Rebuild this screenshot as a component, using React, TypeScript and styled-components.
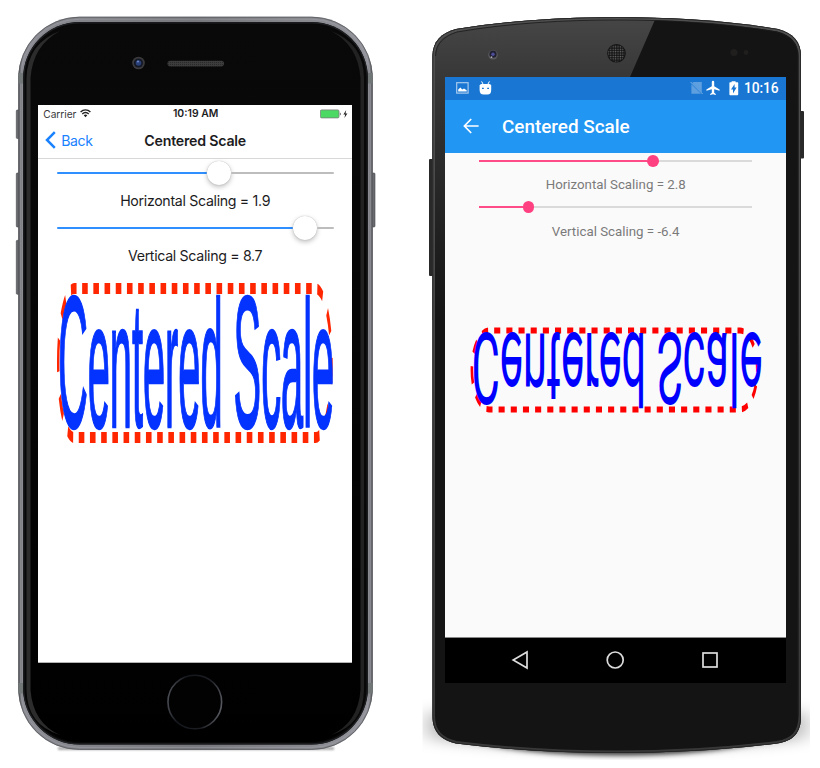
import React from "react";
import styled, { createGlobalStyle } from "styled-components";

const GlobalStyle = createGlobalStyle`
  * { box-sizing: border-box; }
  body { margin: 0; background: #fff; }
`;

const Page = styled.main`
  display: grid;
  grid-template-columns: 410px 410px;
  width: 820px;
  height: 768px;
  overflow: hidden;
  background: #fff;
`;

const Stage = styled.section`
  display: grid;
  grid-template: 768px / 410px;
`;

const Chassis = styled.svg`
  grid-area: 1 / 1;
  display: block;
`;

const Screen = styled.div`
  grid-area: 1 / 1;
  display: flex;
  flex-direction: column;
  overflow: hidden;
  white-space: nowrap;
`;

/* ---------- iOS ---------- */

const IosScreen = styled(Screen)`
  margin: 105.4px 0 0 38.3px;
  width: 313.7px;
  height: 557.4px;
  background: #fff;
  border-bottom: 1px solid #b4b4b4;
  font-family: Inter, "Liberation Sans", sans-serif;
  color: #1c1c1e;
`;

const IosStatus = styled.div`
  display: grid;
  grid-template-columns: 1fr auto 1fr;
  align-items: center;
  flex: none;
  height: 17.2px;
  padding: 0 4px 0 5px;
  font-size: 10.2px;
`;

const Carrier = styled.span`
  display: flex;
  align-items: center;
  gap: 4px;
  color: #3a3a3a;
  letter-spacing: -0.05px;
`;

const IosTime = styled.span`
  font-weight: 600;
  font-size: 10.4px;
  letter-spacing: 0;
`;

const Battery = styled.span`
  display: flex;
  justify-content: flex-end;
`;

const IosNav = styled.div`
  display: grid;
  grid-template-columns: 1fr auto 1fr;
  align-items: center;
  flex: none;
  height: 36px;
  padding: 0 7px 0 7px;
  border-bottom: 1px solid #d8d8d8;
`;

const Back = styled.span`
  display: flex;
  align-items: center;
  gap: 5px;
  color: #1a82ff;
  font-size: 14.1px;
  letter-spacing: -0.45px;
`;

const IosTitle = styled.span`
  font-size: 14.2px;
  font-weight: 600;
  letter-spacing: -0.22px;
`;

const Slider = styled.div<{ $height: number; $inset: string }>`
  display: flex;
  align-items: center;
  flex: none;
  height: ${(p) => p.$height}px;
  padding: ${(p) => p.$inset};
`;

const IosTrack = styled.span<{ $length?: number }>`
  height: 2px;
  border-radius: 1px;
  ${(p) =>
    p.$length
      ? `width: ${p.$length}px; background: #2f8fff;`
      : "flex: 1; background: #bdbdbd;"}
`;

const IosThumb = styled.span`
  width: 24px;
  height: 24px;
  flex: none;
  border-radius: 50%;
  background: #fff;
  box-shadow: 0 0 1px rgba(0, 0, 0, 0.3), 0 2px 5px rgba(0, 0, 0, 0.25);
`;

const IosLabel = styled.div`
  display: flex;
  align-items: center;
  justify-content: center;
  flex: none;
  height: 27px;
  font-size: 14.2px;
  letter-spacing: -0.33px;
`;

const Canvas = styled.svg`
  display: block;
  flex: none;
`;

/* ---------- Android ---------- */

const DroidScreen = styled(Screen)`
  margin: 77px 0 0 35.4px;
  width: 340.6px;
  height: 605.5px;
  background: #fafafa;
  font-family: Roboto, "Liberation Sans", sans-serif;
`;

const DroidStatus = styled.div`
  display: flex;
  align-items: center;
  flex: none;
  height: 22.5px;
  padding: 0 7.4px 0 10.4px;
  background: #1976d2;
  color: #fff;
`;

const Clock = styled.span`
  margin-left: 3px;
  font-size: 13.8px;
  font-weight: 500;
  letter-spacing: -0.1px;
`;

const AppBar = styled.div`
  display: flex;
  align-items: center;
  flex: none;
  height: 53.1px;
  padding-left: 17.6px;
  gap: 23px;
  background: #2196f3;
  color: #fff;
`;

const DroidTitle = styled.span`
  font-size: 18.9px;
  font-weight: 500;
`;

const DroidTrack = styled.span<{ $length?: number }>`
  height: 2px;
  ${(p) =>
    p.$length
      ? `width: ${p.$length}px; background: #ff4c88;`
      : "flex: 1; background: #dadada;"}
`;

const DroidThumb = styled.span`
  width: 11.6px;
  height: 11.6px;
  flex: none;
  border-radius: 50%;
  background: #ff4081;
`;

const DroidLabel = styled.div`
  display: flex;
  align-items: center;
  justify-content: center;
  flex: none;
  height: 30.1px;
  padding-top: 1.4px;
  color: #7a7a7a;
  font-size: 13.3px;
`;

const NavKeys = styled.div`
  display: flex;
  align-items: center;
  justify-content: space-between;
  flex: 1;
  padding: 0 67px 0 66px;
  border-top: 1px solid #888;
  background: #000;
`;

const Spacer = styled.span`
  flex: 1;
`;

const IPhoneBody = () => (
  <Chassis width="410" height="768" viewBox="0 0 410 768">
    <defs>
      <linearGradient id="rim" x1="0" x2="1" y1="0" y2="0">
        <stop offset="0" stopColor="#55565b" />
        <stop offset="0.012" stopColor="#8b8c93" />
        <stop offset="0.5" stopColor="#77787d" />
        <stop offset="0.986" stopColor="#92939a" />
        <stop offset="1" stopColor="#5c5d62" />
      </linearGradient>
      <linearGradient id="glass" x1="0" x2="0" y1="0" y2="1">
        <stop offset="0" stopColor="#090909" />
        <stop offset="0.4" stopColor="#060606" />
        <stop offset="1" stopColor="#000" />
      </linearGradient>
      <linearGradient id="home" x1="0" x2="1" y1="0.4" y2="0.6">
        <stop offset="0" stopColor="#4b4d55" />
        <stop offset="0.25" stopColor="#14171c" />
        <stop offset="0.7" stopColor="#1c1e24" />
        <stop offset="1" stopColor="#575960" />
      </linearGradient>
      <pattern id="mesh" width="2" height="2" patternUnits="userSpaceOnUse">
        <rect width="2" height="2" fill="#3c3c3c" />
        <rect width="1" height="1" fill="#292929" />
      </pattern>
      <filter id="softIos" x="-20%" width="140%" y="-200%" height="500%">
        <feGaussianBlur stdDeviation="1.2" />
      </filter>
    </defs>
    <rect x="58" y="747" width="276" height="3" fill="#aaa" filter="url(#softIos)" />
    <g fill="#686a6f" stroke="#45464a" strokeWidth="0.6">
      <rect x="16.3" y="110" width="4" height="28.5" rx="1" />
      <rect x="16.3" y="173" width="4" height="54" rx="1" />
      <rect x="16.3" y="240.3" width="4" height="54" rx="1" />
      <rect x="371" y="173" width="4" height="54" rx="1" />
    </g>
    <rect x="18.3" y="16.8" width="354.4" height="733" rx="61" fill="url(#rim)" />
    <rect x="18.7" y="17.2" width="353.6" height="732.2" rx="60.6" fill="none" stroke="#58595d" strokeWidth="0.8" />
    <rect x="20.6" y="19.2" width="349.8" height="728.2" rx="58.8" fill="none" stroke="#a2a3aa" strokeWidth="1" strokeOpacity="0.5" />
    <g fill="#717676">
      <rect x="18.3" y="73" width="5" height="10.5" />
      <rect x="367.7" y="73" width="5" height="10.5" />
      <rect x="18.3" y="683" width="5" height="10.5" />
      <rect x="367.7" y="683" width="5" height="10.5" />
    </g>
    <rect x="23" y="22" width="345" height="722.5" rx="56.5" fill="#080808" />
    <rect x="23.8" y="22.8" width="343.4" height="721" rx="55.7" fill="none" stroke="#202124" strokeWidth="1.2" />
    <rect x="27" y="25" width="337" height="717" rx="53" fill="url(#glass)" />
    <path d="M26.5 690V78Q27.5 43 60 31Q33 45 30.5 78V690Q33 723 60 735Q27 725 26.5 690Z" fill="#2c2c2c" />
    <path d="M364 690V78Q363.5 43 331 31Q358 45 360.5 78V690Q358 723 331 735Q363.5 725 364 690Z" fill="#222" />
    <circle cx="138.5" cy="63" r="6.3" fill="#3b3b3e" />
    <circle cx="138.5" cy="63" r="4.6" fill="#141824" />
    <circle cx="138.5" cy="63" r="2.8" fill="#293f78" />
    <circle cx="138" cy="61.5" r="1.1" fill="#6886c4" />
    <rect x="167.5" y="60.8" width="56.5" height="5.6" rx="2.8" fill="url(#mesh)" />
    <circle cx="194.8" cy="702" r="26.8" fill="#020202" stroke="url(#home)" strokeWidth="1.6" />
  </Chassis>
);

const nexusOutline =
  "M432.5 56C432.5 42 441 33 456 29C510 20 565 17.2 617 17.2C670 17.2 724 20 778 29C793 33 801 42 801 56V716C801 733 793 741 777 743.5C725 750 670 753 617 753C565 753 508 750 456 743.5C441 740 432.5 732 432.5 716Z";

const NexusBody = () => (
  <Chassis width="410" height="768" viewBox="410 0 410 768">
    <defs>
      <linearGradient id="faceLeft" x1="0" x2="0" y1="17" y2="320" gradientUnits="userSpaceOnUse">
        <stop offset="0" stopColor="#464646" />
        <stop offset="0.22" stopColor="#363636" />
        <stop offset="1" stopColor="#141414" />
      </linearGradient>
      <linearGradient id="edge" x1="0" x2="0" y1="0" y2="1">
        <stop offset="0" stopColor="#505050" />
        <stop offset="0.7" stopColor="#3f3f3f" />
        <stop offset="1" stopColor="#383838" />
      </linearGradient>
      <clipPath id="bodyClip">
        <path d={nexusOutline} />
      </clipPath>
      <pattern id="grille" width="2.4" height="2.4" patternUnits="userSpaceOnUse">
        <rect width="2.4" height="2.4" fill="#151515" />
        <circle cx="1.2" cy="1.2" r="0.7" fill="#707070" />
      </pattern>
      <filter id="ground" x="-20%" width="140%" y="-60%" height="260%">
        <feGaussianBlur stdDeviation="12 7" />
      </filter>
      <filter id="contact" x="-20%" width="140%" y="-100%" height="300%">
        <feGaussianBlur stdDeviation="9 2.6" />
      </filter>
      <clipPath id="groundClip">
        <rect x="422.5" y="690" width="387.5" height="70" />
      </clipPath>
    </defs>
    <g clipPath="url(#groundClip)">
      <path d="M430 712H804V738Q720 748 617 748Q515 748 430 738Z" fill="#000" fillOpacity="0.32" filter="url(#ground)" />
      <path d="M462 735H774Q730 755.5 617 755.5Q505 755.5 462 735Z" fill="#000" fillOpacity="0.75" filter="url(#contact)" />
    </g>
    <rect x="429" y="159" width="5" height="117" rx="1" fill="#292929" />
    <rect x="799" y="111" width="5" height="47.5" rx="1" fill="#292929" />
    <path d={nexusOutline} fill="#141414" />
    <g clipPath="url(#bodyClip)">
      <path d="M430 15H657L630 77L550 320H430Z" fill="url(#faceLeft)" />
      <path d={nexusOutline} fill="none" stroke="url(#edge)" strokeWidth="5" />
      <path d={nexusOutline} fill="none" stroke="#242424" strokeWidth="1.6" />
      <path
        d="M435.6 56C435.6 44 444 36 457 32C510 22.9 565 20 617 20C670 20 724 22.9 777 32C790 36 798 44 798 56V716"
        fill="none"
        stroke="#1c1c1c"
        strokeWidth="0.8"
      />
    </g>
    <circle cx="493" cy="54.8" r="4.8" fill="#5b5b5f" />
    <circle cx="493" cy="54.2" r="3.6" fill="#202030" />
    <circle cx="493" cy="54.2" r="1.7" fill="#4d4d9a" />
    <circle cx="491.5" cy="57.2" r="0.9" fill="#aaa" />
    <circle cx="616.5" cy="53.3" r="9.3" fill="#141414" />
    <circle cx="616.5" cy="53.3" r="8.4" fill="url(#grille)" />
    <circle cx="734" cy="52.5" r="3.6" fill="#211e1e" />
    <circle cx="746" cy="52.5" r="2.4" fill="#211e1e" />
  </Chassis>
);

const WifiIcon = () => (
  <svg width="11" height="9" viewBox="0 0 11 9" fill="none" stroke="#222" strokeWidth="1.4">
    <path d="M.6 3C3.4.2 7.6.2 10.4 3" />
    <path d="M2.3 4.9C4.1 3.1 6.9 3.1 8.7 4.9" />
    <path d="M3.7 6.2Q5.5 4.7 7.3 6.2L5.5 8.2Z" fill="#222" stroke="none" />
  </svg>
);

const BatteryIcon = () => (
  <svg width="28" height="10" viewBox="0 0 28 10">
    <rect x="0.4" y="0.9" width="18.6" height="8" rx="1.2" fill="#4cd964" stroke="#7d7d7d" strokeWidth="0.8" />
    <path d="M19.8 3.4q1.2.4 1.2 1.5t-1.2 1.5Z" fill="#777" />
    <path d="M26.2 1 23.4 5.4H25.2L24.4 9 27.4 4.4H25.5Z" fill="#222" />
  </svg>
);

type TrackProps = { fill: number };

const IosSlider = ({ fill }: TrackProps) => (
  <Slider $height={28.4} $inset="0 18.4px 0 18.7px">
    <IosTrack $length={fill} />
    <IosThumb />
    <IosTrack />
  </Slider>
);

const DroidSlider = ({ fill }: TrackProps) => (
  <Slider $height={16.4} $inset="0 34px 0 34px">
    <DroidTrack $length={fill} />
    <DroidThumb />
    <DroidTrack />
  </Slider>
);

type BorderProps = { width: number; height: number; color: string };

/* Rounded border whose dash phase starts at the lower end of the left side. */
const DashedBorder = ({ width: w, height: h, color }: BorderProps) => {
  const r = Math.min(20, h / 2);
  const d = `M0 ${h - r}V${r}A${r} ${r} 0 0 1 ${r} 0H${w - r}A${r} ${r} 0 0 1 ${w} ${r}V${h - r}A${r} ${r} 0 0 1 ${w - r} ${h}H${r}A${r} ${r} 0 0 1 0 ${h - r}Z`;
  return <path d={d} fill="none" stroke={color} strokeWidth="3" strokeDasharray="7 7" />;
};

const IPhone = () => (
  <Stage>
    <IPhoneBody />
    <IosScreen>
      <IosStatus>
        <Carrier>
          Carrier
          <WifiIcon />
        </Carrier>
        <IosTime>10:19 AM</IosTime>
        <Battery>
          <BatteryIcon />
        </Battery>
      </IosStatus>
      <IosNav>
        <Back>
          <svg width="11" height="18" viewBox="0 0 11 18" fill="none" stroke="#1a82ff" strokeWidth="2.5">
            <path d="M9.8 1.2 2 9l7.8 7.8" />
          </svg>
          Back
        </Back>
        <IosTitle>Centered Scale</IosTitle>
      </IosNav>
      <IosSlider fill={150.3} />
      <IosLabel>Horizontal Scaling = 1.9</IosLabel>
      <IosSlider fill={236.5} />
      <IosLabel>Vertical Scaling = 8.7</IosLabel>
      <Canvas width="313.7" height="392" viewBox="38.3 269.4 313.7 392">
        <g transform="translate(58.5 289) scale(0.8 3.66)">
          <DashedBorder width={341.6} height={40.7} color="#ff2600" />
        </g>
        <text
          transform="translate(58.2 427.4) scale(0.795 3.62)"
          fontFamily="Liberation Sans, Arial, sans-serif"
          fontSize="50"
          fill="#0433ff"
          stroke="#0433ff"
          strokeWidth="0.7"
        >
          <tspan fontSize="52">C</tspan>entered <tspan fontSize="52">S</tspan>cale
        </text>
      </Canvas>
    </IosScreen>
  </Stage>
);

const Nexus = () => (
  <Stage>
    <NexusBody />
    <DroidScreen>
      <DroidStatus>
        <svg width="13" height="12" viewBox="0 0 13 12">
          <rect x="0.7" y="0.7" width="11.4" height="10.4" fill="none" stroke="#a9caee" strokeWidth="1.2" />
          <path d="M2.2 9.4V7.4L4.4 5.6 6.2 7.4 8 6.4 10.7 8.2V9.4Z" fill="#fff" />
        </svg>
        <svg width="33" height="15" viewBox="0 0 33 15">
          <path d="M10.6 4.6Q11 3 12.4 3H20.4Q21.8 3 22.2 4.6V9Q22.2 13.6 18.4 13.6H14.6Q10.6 13.6 10.6 9Z" fill="#fff" />
          <path d="M12.6.4 14.2 3.4M20.4.4 18.8 3.4" stroke="#fff" strokeWidth="1" />
          <path d="M13 7.4h1.8M18.2 7.4h1.8" stroke="#1976d2" strokeWidth="1.1" />
        </svg>
        <Spacer />
        <svg width="14" height="14" viewBox="0 0 14 14">
          <path d="M3.4 1H11.8V11.4L2.4 2ZM1.4 3.2 11 12.8H1.4Z" fill="#5e9fe0" />
          <path d="M.6 1 12.6 13" stroke="#8dbbea" strokeWidth="0.9" />
        </svg>
        <svg width="17" height="16" viewBox="0 0 17 16">
          <path
            d="M9 .8Q10.2.8 10.2 2V6.2L15.6 9.4V10.8L10.2 9.2V12.8L11.8 13.9V15L9 14.3 6.2 15V13.9L7.8 12.8V9.2L2.4 10.8V9.4L7.8 6.2V2Q7.8.8 9 .8Z"
            fill="#fff"
          />
        </svg>
        <svg width="20" height="15" viewBox="0 0 20 15">
          <path d="M9 1.2H10.6V.2H14.6V1.2H16.6Q17.2 1.2 17.2 2V13.4Q17.2 14.2 16.4 14.2H9.2Q8.4 14.2 8.4 13.4V2Q8.4 1.2 9 1.2Z" fill="#fff" />
          <path d="M13.6 3V6.6H15.6L12 12.4V8.6H10Z" fill="#1976d2" />
        </svg>
        <Clock>10:16</Clock>
      </DroidStatus>
      <AppBar>
        <svg width="16" height="16" viewBox="0 0 16 16" fill="none" stroke="#fff" strokeWidth="1.7">
          <path d="M8.2 1 1.4 8l6.8 7M1.4 8H15.6" />
        </svg>
        <DroidTitle>Centered Scale</DroidTitle>
      </AppBar>
      <DroidSlider fill={168} />
      <DroidLabel>Horizontal Scaling = 2.8</DroidLabel>
      <DroidSlider fill={43.5} />
      <DroidLabel>Vertical Scaling = -6.4</DroidLabel>
      <Canvas width="340.6" height="391.4" viewBox="445.4 245.6 340.6 391.4">
        <g transform="translate(472.3 409) scale(0.869 -1.987)">
          <DashedBorder width={328.4} height={39.7} color="#ff0000" />
        </g>
        <text
          transform="translate(472 332.3) scale(0.869 -2)"
          fontFamily="Roboto, sans-serif"
          fontSize="50"
          fill="#0000ff"
        >
          Centered Scale
        </text>
      </Canvas>
      <NavKeys>
        <svg width="18" height="20" viewBox="0 0 18 20" fill="none" stroke="#dcdcdc" strokeWidth="1.7">
          <path d="M16 2V18L2.2 10Z" />
        </svg>
        <svg width="20" height="20" viewBox="0 0 20 20" fill="none" stroke="#dcdcdc" strokeWidth="1.7">
          <circle cx="10.2" cy="10" r="8" />
        </svg>
        <svg width="18" height="18" viewBox="0 0 18 18" fill="none" stroke="#dcdcdc" strokeWidth="1.7">
          <rect x="2" y="2" width="14" height="14" />
        </svg>
      </NavKeys>
    </DroidScreen>
  </Stage>
);

export default function App() {
  return (
    <>
      <GlobalStyle />
      <Page>
        <IPhone />
        <Nexus />
      </Page>
    </>
  );
}
